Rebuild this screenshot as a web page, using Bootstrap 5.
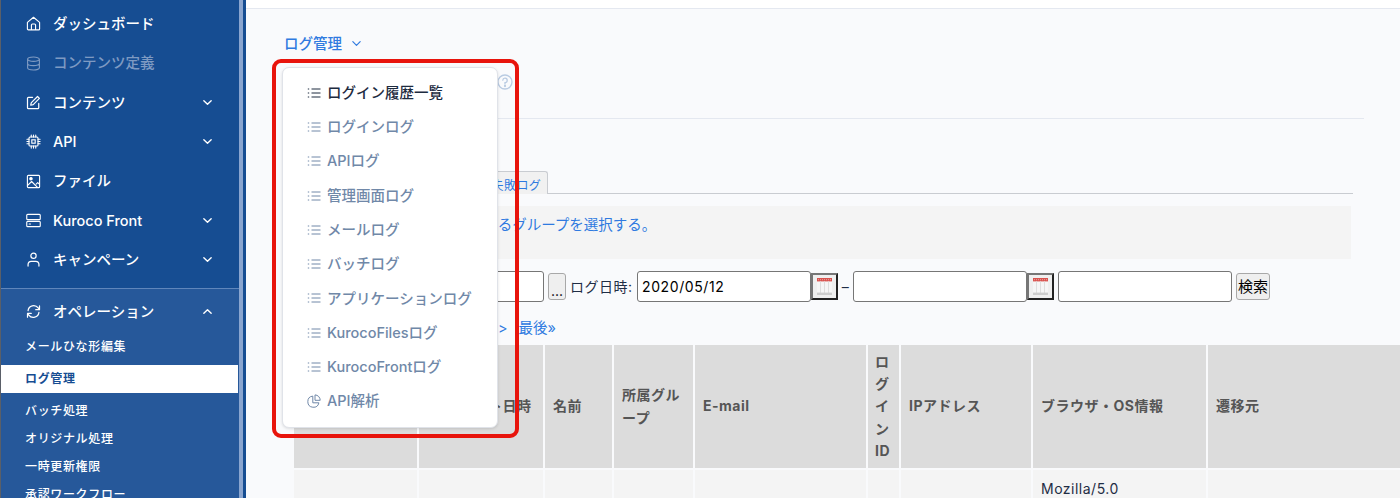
<!DOCTYPE html>
<html lang="ja">
<head>
<meta charset="utf-8">
<title>ログ管理</title>
<link href="https://cdn.jsdelivr.net/npm/bootstrap@5.3.0/dist/css/bootstrap.min.css" rel="stylesheet">
<style>
html,body{height:498px;overflow:hidden}
body{font-family:Inter,"Noto Sans CJK JP",sans-serif;font-size:14.5px;font-weight:500;background:#f9fafc;color:#1f2d45}
.shell{height:498px}
.sideouter{flex:0 0 246px;border-right:3px solid #164d92;background:#8aa5cf}
.sidenav{width:239px;height:100%;background:#164d92;border-left:1px solid #5a5f68;overflow:hidden}
.sidetop{padding:4.3px 0 8.4px}
.sideitem{height:39.33px;padding:0 25px 0 25px;color:#fff;gap:12px}
.sideitem.muted-item{color:#7e9ac2}
.sideitem.open-item{margin-bottom:1px}
.sideitem .ico{width:15px;height:15px;flex:none}
.sideitem .chev{width:11px;height:11px;margin-left:auto;margin-right:1px}
.sidesub{background:#26589a;border-top:1px solid #5f86bb;padding-top:3.3px;height:300px}
.subitem{height:28px;padding-left:24px;font-size:12px;letter-spacing:.65px;color:#fff}
.subitem.current{background:#fff;color:#164d92;font-weight:700;margin:4px 1px 4px 0}
.mainpane{min-width:0;flex:1}
.topline{height:9px;background:#fff;border-bottom:1px solid #e4e8f0}
.crumbbar{padding:24px 0 5px 38px;height:50px;color:#2f7ae0}
.crumbbar .chev{width:11px;height:11px;margin-left:9px}
.menuwrap{position:relative}
.logmenu{position:absolute;top:8px;left:-2px;width:216px;height:361px;padding:7.5px 0 0;margin:0;border:1px solid #e0e3e9;border-radius:7px;box-shadow:0 1px 3px rgba(0,0,0,.12);z-index:5;background:#fff;display:block}
.logmenu .dropdown-item{height:34.3px;padding:0 0 0 24px;gap:6px;color:#7088a8;font-size:14.5px;font-weight:500;display:flex;align-items:center}
.logmenu .dropdown-item.first{color:#1d2b3f}
.logmenu svg{width:14px;height:14px;flex:none}
.annot{position:absolute;left:272px;top:59px;width:247px;height:379px;border:4px solid #e8140c;border-radius:9px;z-index:6;pointer-events:none}
.titlerow{margin-left:38px;margin-right:36px;height:60px;border-bottom:1px solid #e4e8f0;padding:10px 0 0 10px;gap:6px}
.titlerow h1{font-size:24px;font-weight:500;margin:0;letter-spacing:0}
.titlerow>svg{width:16px;height:16px;margin-left:5px;margin-top:5px}
.tabline{margin:52px 47px 0 48px;height:23px;border-bottom:1px solid #c9ccd1;padding-left:24px}
.tabbox{height:23px;border:1px solid #c9ccd1;border-bottom:0;border-radius:3px 3px 0 0;background:#f1f1f1;padding:0 6px;font-size:12px;font-weight:400;color:#2f7ae0;line-height:27px;letter-spacing:.4px}
.tabbox.first-tab{width:117px}
.infobox{margin:12px 49px 0 48px;height:53px;background:#f4f4f4;padding:7.5px 16px;color:#2f7ae0;font-size:14.5px;font-weight:400}
.searchrow{margin:12px 0 0 48px;height:31px;white-space:nowrap;font-size:14px;font-weight:400;letter-spacing:.5px}
.fieldbox{width:174px;height:31px;border:1px solid #767676;border-radius:3px;background:#fff;padding:0 4px;color:#000;font:14px Inter,sans-serif;letter-spacing:.6px}
.tinybtn{height:27px;padding:0;border:1px solid #a8a8a8;border-radius:3px;background:#efefef;color:#000;font-size:14px;font-weight:400;line-height:1;letter-spacing:0}
.dotbtn{width:18px;margin:0 4px;padding-top:8px}
.findbtn{width:34px;font-size:15px}
.calbtn{width:27px;height:27px;border:2px solid;border-color:#767676 #222 #222 #767676;background:#efefef;padding:3px 4px}
.calbtn svg{display:block;width:15px;height:17px}
.dash{width:15px;text-align:center;margin-right:-4px;margin-left:-4px;padding:0 4px;box-sizing:content-box}
.lbl{width:76px}
.lbl.datelbl{width:67px}
.pagerrow{margin:17px 0 0 48px;height:17px;line-height:17px;color:#2f7ae0;padding-left:204px;gap:11px;font-size:14.5px;font-weight:400}
.logtable{table-layout:fixed;border-collapse:separate;border-spacing:2px;width:1118px;margin:7px 0 0 46px;--bs-table-bg:transparent}
.logtable>thead>tr>th{background:#dcdcdc;color:#555;font-size:14px;font-weight:700;line-height:22.4px;padding:5.5px 8px;vertical-align:middle;height:123px;border:0;letter-spacing:.5px}
.logtable>tbody>tr>td{background:#f4f4f4;color:#1f2d45;font-size:14px;font-weight:400;line-height:22px;padding:8px 8px;border:0;vertical-align:top;height:60px;letter-spacing:.5px}
.logtable>thead>tr>th.tight{padding-left:7px;padding-right:7px}
.logtable>thead>tr>th.datecol{padding-left:11px}
</style>
</head>
<body>
<div class="shell d-flex">
  <div class="sideouter">
    <nav class="sidenav d-flex flex-column">
      <div class="sidetop">
        <div class="sideitem d-flex align-items-center"><svg class="ico" viewBox="0 0 16 16" fill="none" stroke="currentColor" stroke-width="1.2" stroke-linejoin="round"><path d="M1.5 6.8 8 1.3l6.5 5.5v7a1 1 0 0 1-1 1h-11a1 1 0 0 1-1-1z"/><path d="M5.8 14.8V9.5a1 1 0 0 1 1-1h2.4a1 1 0 0 1 1 1v5.3"/></svg><span>ダッシュボード</span></div>
        <div class="sideitem muted-item d-flex align-items-center"><svg class="ico" viewBox="0 0 16 16" fill="none" stroke="currentColor" stroke-width="1.2"><ellipse cx="8" cy="3.4" rx="6.3" ry="2.3"/><path d="M1.7 3.4v9.2c0 1.3 2.8 2.3 6.3 2.3s6.3-1 6.3-2.3V3.4M1.7 8c0 1.3 2.8 2.3 6.3 2.3s6.3-1 6.3-2.3"/></svg><span>コンテンツ定義</span></div>
        <div class="sideitem d-flex align-items-center"><svg class="ico" viewBox="0 0 16 16" fill="none" stroke="currentColor" stroke-width="1.3" stroke-linecap="round" stroke-linejoin="round"><path d="M7 2.5H2.6a1 1 0 0 0-1 1v10a1 1 0 0 0 1 1h10a1 1 0 0 0 1-1V9"/><path d="M12.3 1.6l2 2-6.6 6.6-2.7.7.7-2.7z"/></svg><span>コンテンツ</span><svg class="chev" viewBox="0 0 12 12" fill="none" stroke="currentColor" stroke-width="1.5" stroke-linecap="round" stroke-linejoin="round"><path d="M2 4l4 4 4-4"/></svg></div>
        <div class="sideitem d-flex align-items-center"><svg class="ico" viewBox="0 0 16 16" fill="none" stroke="currentColor" stroke-width="1.2" stroke-linecap="round"><rect x="3.2" y="3.2" width="9.6" height="9.6" rx="1.2"/><rect x="6.2" y="6.2" width="3.6" height="3.6"/><path d="M5.6 1v2.2M8 1v2.2M10.4 1v2.2M5.6 12.8V15M8 12.8V15M10.4 12.8V15M1 5.6h2.2M1 8h2.2M1 10.4h2.2M12.8 5.6H15M12.8 8H15M12.8 10.4H15"/></svg><span>API</span><svg class="chev" viewBox="0 0 12 12" fill="none" stroke="currentColor" stroke-width="1.5" stroke-linecap="round" stroke-linejoin="round"><path d="M2 4l4 4 4-4"/></svg></div>
        <div class="sideitem d-flex align-items-center"><svg class="ico" viewBox="0 0 16 16" fill="none" stroke="currentColor" stroke-width="1.2" stroke-linejoin="round"><rect x="1.5" y="1.5" width="13" height="13" rx="1"/><path d="M1.5 12.5 6 8l6.5 6.5M10.5 11l2-1.8 2 1.8"/><circle cx="5.3" cy="5" r="1.3" fill="currentColor"/></svg><span>ファイル</span></div>
        <div class="sideitem d-flex align-items-center"><svg class="ico" viewBox="0 0 16 16" fill="none" stroke="currentColor" stroke-width="1.2" stroke-linecap="round"><rect x=".8" y="1.5" width="14.4" height="5.6" rx="1"/><rect x=".8" y="8.9" width="14.4" height="5.6" rx="1"/><path d="M3.4 11.7h1.4"/></svg><span>Kuroco Front</span><svg class="chev" viewBox="0 0 12 12" fill="none" stroke="currentColor" stroke-width="1.5" stroke-linecap="round" stroke-linejoin="round"><path d="M2 4l4 4 4-4"/></svg></div>
        <div class="sideitem d-flex align-items-center"><svg class="ico" viewBox="0 0 16 16" fill="none" stroke="currentColor" stroke-width="1.3" stroke-linecap="round"><circle cx="8" cy="4" r="2.8"/><path d="M2.2 15v-1.6c0-2 1.6-3.4 3.4-3.4h4.8c1.8 0 3.4 1.4 3.4 3.4V15"/></svg><span>キャンペーン</span><svg class="chev" viewBox="0 0 12 12" fill="none" stroke="currentColor" stroke-width="1.5" stroke-linecap="round" stroke-linejoin="round"><path d="M2 4l4 4 4-4"/></svg></div>
      </div>
      <div class="sidesub">
        <div class="sideitem open-item d-flex align-items-center"><svg class="ico" viewBox="0 0 16 16" fill="none" stroke="currentColor" stroke-width="1.3" stroke-linecap="round" stroke-linejoin="round"><path d="M2.2 7A6 6 0 0 1 13 4.2L14.4 6M14.4 2v4h-4M13.8 9A6 6 0 0 1 3 11.8L1.6 10M1.6 14v-4h4"/></svg><span>オペレーション</span><svg class="chev" viewBox="0 0 12 12" fill="none" stroke="currentColor" stroke-width="1.5" stroke-linecap="round" stroke-linejoin="round"><path d="M2 8l4-4 4 4"/></svg></div>
        <div class="subitem d-flex align-items-center">メールひな形編集</div>
        <div class="subitem current d-flex align-items-center">ログ管理</div>
        <div class="subitem d-flex align-items-center">バッチ処理</div>
        <div class="subitem d-flex align-items-center">オリジナル処理</div>
        <div class="subitem d-flex align-items-center">一時更新権限</div>
        <div class="subitem d-flex align-items-center">承認ワークフロー</div>
      </div>
    </nav>
  </div>
  <main class="mainpane">
    <div class="topline"></div>
    <div class="crumbbar menuwrap">
      <div class="d-flex align-items-center"><span>ログ管理</span><svg class="chev" viewBox="0 0 12 12" fill="none" stroke="currentColor" stroke-width="1.3" stroke-linecap="round" stroke-linejoin="round"><path d="M2 4l4 4 4-4"/></svg></div>
    </div>
    <div class="titlerow d-flex align-items-start menuwrap">
      <ul class="dropdown-menu logmenu list-unstyled">
        <li><a class="dropdown-item first" href="#"><svg viewBox="0 0 14 14" fill="none" stroke="currentColor" stroke-width="1"><path d="M4.5 3h9M4.5 7h9M4.5 11h9M.8 3h1.4M.8 7h1.4M.8 11h1.4"/></svg>ログイン履歴一覧</a></li>
        <li><a class="dropdown-item" href="#"><svg viewBox="0 0 14 14" fill="none" stroke="currentColor" stroke-width="1"><path d="M4.5 3h9M4.5 7h9M4.5 11h9M.8 3h1.4M.8 7h1.4M.8 11h1.4"/></svg>ログインログ</a></li>
        <li><a class="dropdown-item" href="#"><svg viewBox="0 0 14 14" fill="none" stroke="currentColor" stroke-width="1"><path d="M4.5 3h9M4.5 7h9M4.5 11h9M.8 3h1.4M.8 7h1.4M.8 11h1.4"/></svg>APIログ</a></li>
        <li><a class="dropdown-item" href="#"><svg viewBox="0 0 14 14" fill="none" stroke="currentColor" stroke-width="1"><path d="M4.5 3h9M4.5 7h9M4.5 11h9M.8 3h1.4M.8 7h1.4M.8 11h1.4"/></svg>管理画面ログ</a></li>
        <li><a class="dropdown-item" href="#"><svg viewBox="0 0 14 14" fill="none" stroke="currentColor" stroke-width="1"><path d="M4.5 3h9M4.5 7h9M4.5 11h9M.8 3h1.4M.8 7h1.4M.8 11h1.4"/></svg>メールログ</a></li>
        <li><a class="dropdown-item" href="#"><svg viewBox="0 0 14 14" fill="none" stroke="currentColor" stroke-width="1"><path d="M4.5 3h9M4.5 7h9M4.5 11h9M.8 3h1.4M.8 7h1.4M.8 11h1.4"/></svg>バッチログ</a></li>
        <li><a class="dropdown-item" href="#"><svg viewBox="0 0 14 14" fill="none" stroke="currentColor" stroke-width="1"><path d="M4.5 3h9M4.5 7h9M4.5 11h9M.8 3h1.4M.8 7h1.4M.8 11h1.4"/></svg>アプリケーションログ</a></li>
        <li><a class="dropdown-item" href="#"><svg viewBox="0 0 14 14" fill="none" stroke="currentColor" stroke-width="1"><path d="M4.5 3h9M4.5 7h9M4.5 11h9M.8 3h1.4M.8 7h1.4M.8 11h1.4"/></svg>KurocoFilesログ</a></li>
        <li><a class="dropdown-item" href="#"><svg viewBox="0 0 14 14" fill="none" stroke="currentColor" stroke-width="1"><path d="M4.5 3h9M4.5 7h9M4.5 11h9M.8 3h1.4M.8 7h1.4M.8 11h1.4"/></svg>KurocoFrontログ</a></li>
        <li><a class="dropdown-item" href="#"><svg viewBox="0 0 14 14" fill="none" stroke="currentColor" stroke-width="1" stroke-linejoin="round"><path d="M5.8 2.1a5.6 5.6 0 1 0 6.1 6.7H5.8z"/><path d="M8 .9a5.4 5.4 0 0 1 5.2 5.4H8z"/></svg>API解析</a></li>
      </ul>
      <h1>ログイン履歴一覧</h1>
      <svg viewBox="0 0 16 16" fill="none" stroke="#b9cbe2" stroke-width="1.3"><circle cx="8" cy="8" r="7"/><path d="M5.8 6.2A2.2 2.2 0 1 1 8 8.6V10" stroke-linecap="round"/><circle cx="8" cy="12" r=".5"/></svg>
    </div>
    <div class="tabline d-flex">
      <div class="tabbox first-tab">ログイン履歴</div>
      <div class="tabbox">ログイン失敗ログ</div>
    </div>
    <div class="infobox">ここをクリックして対象となるグループを選択する。</div>
    <form class="searchrow d-flex align-items-center">
      <span class="lbl">メンバー:</span>
      <input class="fieldbox" type="text" aria-label="メンバー">
      <button class="tinybtn dotbtn" type="button">...</button>
      <span class="lbl datelbl">ログ日時:</span>
      <input class="fieldbox" type="text" value="2020/05/12" aria-label="開始日">
      <button class="calbtn" type="button" aria-label="カレンダー"><svg viewBox="0 0 15 17"><rect width="15" height="17" fill="#f6f6f6"/><rect width="15" height="3.4" fill="#d9534f"/><path d="M1 1.7h13" stroke="#f3c9c7" stroke-width=".7" stroke-dasharray="1 1"/><path d="M3.5 3.4v13.6M7.5 3.4v13.6M11.5 3.4v13.6" stroke="#dedede"/><rect y="14.6" width="15" height="2.4" fill="#cdcdcd"/></svg></button>
      <span class="dash">–</span>
      <input class="fieldbox" type="text" aria-label="終了日">
      <button class="calbtn" type="button" aria-label="カレンダー"><svg viewBox="0 0 15 17"><rect width="15" height="17" fill="#f6f6f6"/><rect width="15" height="3.4" fill="#d9534f"/><path d="M1 1.7h13" stroke="#f3c9c7" stroke-width=".7" stroke-dasharray="1 1"/><path d="M3.5 3.4v13.6M7.5 3.4v13.6M11.5 3.4v13.6" stroke="#dedede"/><rect y="14.6" width="15" height="2.4" fill="#cdcdcd"/></svg></button>
      <input class="fieldbox ms-1" type="text" aria-label="キーワード">
      <button class="tinybtn findbtn ms-1" type="button">検索</button>
    </form>
    <div class="pagerrow d-flex"><span>&gt;</span><span>最後»</span></div>
    <table class="table logtable">
      <colgroup><col style="width:123px"><col style="width:124px"><col style="width:67px"><col style="width:79px"><col style="width:171px"><col style="width:31px"><col style="width:130px"><col style="width:173px"><col style="width:200px"></colgroup>
      <thead><tr><th></th><th class="datecol">ログアウト日時</th><th>名前</th><th>所属グループ</th><th>E-mail</th><th class="tight">ログインID</th><th>IPアドレス</th><th>ブラウザ・OS情報</th><th>遷移元</th></tr></thead>
      <tbody><tr><td></td><td></td><td></td><td></td><td></td><td></td><td></td><td>Mozilla/5.0</td><td></td></tr></tbody>
    </table>
  </main>
</div>
<div class="annot"></div>
<script src="https://cdn.jsdelivr.net/npm/bootstrap@5.3.0/dist/js/bootstrap.bundle.min.js"></script>
</body>
</html>
